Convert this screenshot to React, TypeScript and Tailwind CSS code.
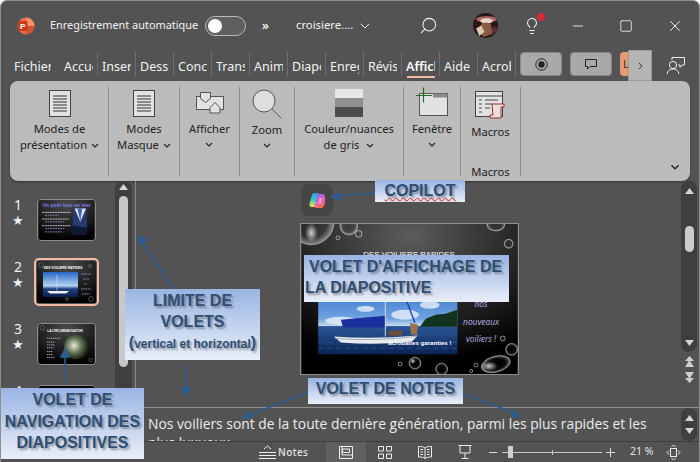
import React from "react";
import { Search, X, Square, Minus, Lightbulb, ChevronDown } from "lucide-react";

const tabs: string[] = ["Fichier", "Accueil", "Insertion", "Dessin", "Conception", "Transitions", "Animations", "Diaporama", "Enregistrement", "Révision", "Affichage", "Aide", "Acrobat"];

function Chev({ className = "" }: { className?: string }) {
  return (
    <svg viewBox="0 0 8 5" className={"w-2 h-[5px] inline-block " + className} fill="none" stroke="currentColor" strokeWidth="1.1">
      <path d="M1 1l3 3 3-3" />
    </svg>
  );
}

function PageIcon() {
  return (
    <svg width="24" height="29" viewBox="0 0 24 29">
      <rect x="1.5" y="1.5" width="21" height="26" fill="#e2e2e2" stroke="#444" />
      <path d="M5 7h14M5 10h14M5 13h14M5 16h14M5 19h14M5 22h14" stroke="#333" />
    </svg>
  );
}

function Group({ w, children, label }: { w: number; children: React.ReactNode; label?: string }) {
  return (
    <div className="flex flex-col items-center border-r border-[#8c8c8c] pt-[2px] h-[89px] shrink-0" style={{ width: w }}>
      {children}
      {label && <div className="mt-auto -mb-[4px] text-[11.2px] leading-[16px] text-[#222]">{label}</div>}
    </div>
  );
}

function Lbl({ lines, chevInline, chevBelow }: { lines: string[]; chevInline?: boolean; chevBelow?: boolean }) {
  return (
    <div className="mt-[3px] text-[11.2px] leading-[16px] text-[#222] text-center whitespace-nowrap">
      {lines.map((l, i) => (
        <div key={i}>
          {l}
          {chevInline && i === lines.length - 1 && <Chev className="ml-[4px] align-[1px]" />}
        </div>
      ))}
      {chevBelow && <div className="h-[16px] flex items-center justify-center"><Chev /></div>}
    </div>
  );
}

function Thumb1() {
  return (
    <svg width="59" height="42" viewBox="0 0 59 42" className="block rounded-[4px] border border-[#8a8a8a] box-border">
      <defs>
        <radialGradient id="t1" cx="50%" cy="10%" r="90%"><stop offset="0" stop-color="#4a4a4a" /><stop offset="1" stop-color="#000" /></radialGradient>
      </defs>
      <rect width="59" height="42" fill="url(#t1)" />
      <text x="29.500" y="7.500" fontSize="5.400" fill="#7579e8" textAnchor="middle" fontFamily="Liberation Sans" fontWeight="bold">Un petit tour en mer</text>
      <g strokeWidth="0.900" strokeDasharray="2 0.700">
        <path d="M4 13h30M4 20h28M4 27h30" stroke="#e3e3f2" />
        <path d="M7 16h14M7 23h20M7 30h20M7 33.500h18" stroke="#8f8fd0" />
      </g>
      <rect x="36" y="9" width="15" height="27" fill="#25396a" />
      <path d="M38 9l6 14 6-14z" fill="#e3e8f2" />
      <path d="M41 9l3 14 2-14z" fill="#3f66b8" />
      <path d="M36 27l15 2v7H36z" fill="#101a36" />
    </svg>
  );
}

function Thumb2() {
  return (
    <svg width="59" height="42" viewBox="0 0 59 42" className="rounded-[2px] block">
      <defs>
        <radialGradient id="t2" cx="50%" cy="10%" r="90%"><stop offset="0" stop-color="#4a4a4a" /><stop offset="1" stop-color="#000" /></radialGradient>
        <linearGradient id="t2s" x1="0" x2="0" y1="0" y2="1"><stop offset="0" stop-color="#2467c8" /><stop offset="0.55" stop-color="#b4d2f0" /><stop offset="0.68" stop-color="#1b3f80" /><stop offset="1" stop-color="#0d1f4c" /></linearGradient>
      </defs>
      <rect width="59" height="42" fill="url(#t2)" />
      <text x="26" y="8" fontSize="3.300" fill="#fff" textAnchor="middle" fontFamily="Liberation Sans" fontWeight="bold">DES VOILIERS RAPIDES</text>
      <rect x="6" y="11" width="35" height="25" fill="url(#t2s)" />
      <path d="M10 30h22l-3 2.500H13z" fill="#eee" />
      <path d="M20 14v16" stroke="#ddd" strokeWidth="0.600" />
      <path d="M44 13h10M46 18h6M47 23h3M44 28h10M45 33h8" stroke="#9c9ce0" strokeWidth="0.800" strokeDasharray="1.600 0.600" />
      <g fill="none" stroke="#999" strokeWidth="0.500"><circle cx="4" cy="4" r="2.400" /><circle cx="54" cy="38" r="2.400" /><circle cx="30" cy="38" r="1.400" /><circle cx="53" cy="5" r="1.500" /></g>
    </svg>
  );
}

function Thumb3() {
  return (
    <svg width="59" height="42" viewBox="0 0 59 42" className="block rounded-[4px] border border-[#8a8a8a] box-border">
      <defs>
        <radialGradient id="t3" cx="50%" cy="10%" r="90%"><stop offset="0" stop-color="#4a4a4a" /><stop offset="1" stop-color="#000" /></radialGradient>
        <radialGradient id="t3g" cx="40%" cy="45%" r="60%"><stop offset="0" stop-color="#e6ecd8" /><stop offset="0.550" stop-color="#586a4c" /><stop offset="1" stop-color="#14180f" /></radialGradient>
      </defs>
      <rect width="59" height="42" fill="url(#t3)" />
      <text x="28" y="8" fontSize="3.200" fill="#fff" textAnchor="middle" fontFamily="Liberation Sans" fontWeight="bold">LA CIRCUMNAVIGATION</text>
      <circle cx="40" cy="24" r="13" fill="url(#t3g)" />
      <path d="M9 15h14M9 19h8M9 22h8M9 25h7M9 29h6M9 32h6M9 35h8" stroke="#c9c9e6" strokeWidth="0.800" strokeDasharray="1.500 0.600" />
      <g fill="none" stroke="#999" strokeWidth="0.500"><circle cx="4" cy="4" r="2.400" /><circle cx="55" cy="38" r="2" /></g>
    </svg>
  );
}

function Row({ n, children, last }: { n: number; children?: React.ReactNode; last?: boolean }) {
  return (
    <div className="flex h-[62px] shrink-0 items-start">
      <div className="w-[36px] pl-[12px] -mt-px leading-[14px] text-[#f0f0f0] text-[14px] shrink-0">
        <div className="w-[12px] text-center">{n}</div>
        {!last && <div className="w-[12px] text-center text-[13px] leading-[16px]">★</div>}
      </div>
      {children}
    </div>
  );
}

function Slide() {
  return (
    <svg width="219" height="152" viewBox="0 0 219 152" className="block border border-[#8e8e8e] box-border">
      <defs>
        <radialGradient id="sb" cx="50%" cy="8%" r="85%"><stop offset="0" stop-color="#5c5c5c" /><stop offset="1" stop-color="#000" /></radialGradient>
        <linearGradient id="sky" x1="0" x2="0" y1="0" y2="1"><stop offset="0" stop-color="#2f6cc6" /><stop offset="0.5" stop-color="#6fa4e0" /><stop offset="0.6" stop-color="#c2d8ee" /><stop offset="0.61" stop-color="#2a5596" /><stop offset="1" stop-color="#0b2454" /></linearGradient>
        <radialGradient id="bub" cx="50%" cy="50%" r="50%"><stop offset="0" stop-color="#fff" stop-opacity="0" /><stop offset="0.7" stop-color="#fff" stop-opacity="0.04" /><stop offset="1" stop-color="#fff" stop-opacity="0.45" /></radialGradient>
        <radialGradient id="hi" cx="50%" cy="50%" r="50%"><stop offset="0" stop-color="#ddd" stop-opacity="0.9" /><stop offset="1" stop-color="#ddd" stop-opacity="0" /></radialGradient>
      </defs>
      <rect width="219" height="152" fill="url(#sb)" />
      <g fill="url(#bub)" stroke="#d8d8d8" strokeOpacity="0.7" strokeWidth="0.700">
        <circle cx="10" cy="-2" r="23" />
        <circle cx="48" cy="2" r="9" />
        <circle cx="37" cy="14" r="2" />
        <circle cx="58" cy="10" r="3.500" />
        <circle cx="210" cy="20" r="4.500" />
        <ellipse cx="197" cy="1" rx="9" ry="6" />
        <circle cx="115" cy="141" r="6" />
        <circle cx="100" cy="142" r="2" />
        <circle cx="142" cy="147" r="6" />
        <circle cx="177" cy="143" r="2" />
        <circle cx="172" cy="149" r="1.500" />
        <ellipse cx="197" cy="142" rx="15" ry="8" transform="rotate(-15 197 142)" />
        <circle cx="213" cy="127" r="6" />
        <circle cx="204" cy="116" r="2.500" />
      </g>
      <ellipse cx="10" cy="9" rx="6.500" ry="10" fill="url(#hi)" />
      <ellipse cx="190" cy="144" rx="9" ry="5" fill="url(#hi)" />
      <circle cx="113" cy="139" r="3" fill="url(#hi)" />
      <text x="109" y="33" fontSize="8" fill="#fff" textAnchor="middle" fontFamily="Liberation Sans">DES VOILIERS RAPIDES</text>
      <rect x="17" y="60" width="141" height="72" fill="url(#sky)" />
      <g fill="#e8f0fa" opacity="0.8">
        <ellipse cx="40" cy="98" rx="16" ry="4" /><ellipse cx="65" cy="86" rx="9" ry="3" /><ellipse cx="105" cy="92" rx="14" ry="5" /><ellipse cx="130" cy="82" rx="10" ry="4" />
      </g>
      <path d="M120 104l6-8 10-4 10-1 12-4v17z" fill="#12331e" />
      <path d="M17 112h141M17 120h141M17 126h141" stroke="#3f6cb0" strokeWidth="0.800" strokeDasharray="5 4" opacity="0.600" />
      <path d="M33 114q40 3 85-1l-6 6q-35 4-72 1z" fill="#e9ecef" />
      <path d="M33 116q40 3 84-2" fill="none" stroke="#7f8c9c" strokeWidth="0.700" />
      <path d="M40 97l45-4v12H42z" fill="#1b2f9e" />
      <path d="M85 62v52" stroke="#d2dae4" strokeWidth="1" />
      <path d="M107 79l8 21" stroke="#2a3fb5" strokeWidth="1.400" />
      <path d="M88 108h14v5H88z" fill="#6e4b3a" />
      <path d="M110 100l8 2-1 10h-6z" fill="#a0704f" />
      <text x="120" y="122.500" fontSize="6.200" fontWeight="bold" fill="#fff" textAnchor="middle" fontFamily="Liberation Sans">acrobaties garanties !</text>
      <g fontFamily="Open Sans" fontStyle="italic" fontSize="8.500" fill="#b6b6ea" textAnchor="middle">
        <text x="182" y="84">nos</text>
        <text x="182" y="102">nouveaux</text>
        <text x="182" y="120">voiliers !</text>
      </g>
    </svg>
  );
}

function Label({ className, children }: { className: string; children: React.ReactNode }) {
  return (
    <div className={"absolute bg-gradient-to-b from-[#9ab4e3] to-[#e9eef8] text-[#2e4e74] font-bold [font-family:'Liberation_Sans',sans-serif] [text-shadow:2px_2px_2px_rgba(60,60,60,0.45)] " + className}>
      {children}
    </div>
  );
}

export default function App() {
  return (
    <div className="relative w-[700px] h-[462px] bg-[#535353] overflow-hidden rounded-t-[7px] border-t border-x border-[#8f8f8f] box-border flex flex-col text-[#f2f2f2] [font-family:'Noto_Sans',sans-serif]">
      {/* title bar */}
      <div className="h-[51px] shrink-0 flex items-center relative -ml-px pb-[2px]">
        <svg width="18" height="18" viewBox="0 0 18 18" className="ml-[17px] shrink-0">
          <circle cx="9" cy="9" r="8.500" fill="#ed6c47" />
          <path d="M9 .5A8.500 8.500 0 0 1 17.500 9H9z" fill="#ff8f6b" />
          <path d="M9 9h8.500A8.500 8.500 0 0 1 9 17.500z" fill="#d35230" />
          <rect x="1" y="4" width="9.500" height="10" rx="1" fill="#c43e1c" />
          <text x="5.700" y="12" fontSize="8" fontWeight="bold" fill="#fff" textAnchor="middle" fontFamily="Liberation Sans">P</text>
        </svg>
        <span className="ml-[15px] text-[10.900px] whitespace-nowrap w-[155px]">Enregistrement automatique</span>
        <span className="w-[41px] h-[20px] rounded-full border border-[#b9b9b9] bg-[#5f5f5f] flex items-center pl-[2px] shrink-0">
          <span className="w-[14px] h-[14px] rounded-full bg-white" />
        </span>
        <span className="ml-[16px] w-[34px] text-[12px] font-semibold shrink-0">»</span>
        <span className="text-[11.300px] whitespace-nowrap w-[61px] shrink-0">croisiere....</span>
        <ChevronDown size={16} strokeWidth={1.400} className="shrink-0" />
        <Search size={19} strokeWidth={1.300} className="ml-[46px] shrink-0 -scale-x-100" />
        <svg width="25" height="25" viewBox="0 0 24 24" className="ml-[35px] shrink-0">
          <defs>
            <clipPath id="av"><circle cx="12" cy="12" r="12" /></clipPath>
            <filter id="avb"><feGaussianBlur stdDeviation="0.600" /></filter>
          </defs>
          <g clipPath="url(#av)">
            <rect width="24" height="24" fill="#2a1517" />
            <g filter="url(#avb)">
              <ellipse cx="13" cy="6" rx="10" ry="3" fill="#a86a68" />
              <ellipse cx="13" cy="7.500" rx="6" ry="2.500" fill="#ead3c6" />
              <path d="M8 10l5-1 4 1 2 10-9 3-4-5z" fill="#8a5c42" />
              <path d="M3 15l5-3 3 6-5 4z" fill="#d8c8ae" />
              <circle cx="21" cy="16" r="3" fill="#55302f" />
            </g>
          </g>
        </svg>
        <span className="relative ml-[25px] shrink-0 flex">
          <Lightbulb size={18} strokeWidth={1.400} />
          <span className="absolute -top-[4px] right-[-4px] w-2 h-2 rounded-full bg-[#d92b36]" />
        </span>
        <Minus size={16} strokeWidth={1.300} className="ml-[29px] shrink-0" />
        <Square size={14} strokeWidth={1.400} className="ml-[33px] shrink-0" />
        <X size={18} strokeWidth={1.300} className="ml-[33px] shrink-0" />
      </div>

      {/* tabs */}
      <div className="h-[29px] shrink-0 relative flex items-start -mx-px">
        {tabs.map((t, i) => (
          <React.Fragment key={t}>
            <div
              className={"shrink-0 overflow-hidden whitespace-nowrap text-[12.500px] leading-[24px] h-[24px] pt-[3px] " + (t === "Affichage" ? "font-semibold text-white" : "")}
              style={{ width: i === 0 ? 37 : 29, marginLeft: i === 0 ? 14 : i === 1 ? 13 : 4 }}
            >
              {i < 1 ? t : t.slice(0, t === "Affichage" ? 7 : 6)}
            </div>
            {i > 0 && <div className="ml-[4px] w-px h-[24px] bg-[#6e6e6e] shrink-0" />}
          </React.Fragment>
        ))}
        <div className="absolute left-[407px] top-[24px] w-[28px] h-[2px] bg-[#f0b9a5]" />
        <div className="ml-[4px] w-[42px] h-[24px] rounded-[4px] bg-[#a9a9a9] border border-[#888] flex items-center justify-center shrink-0">
          <svg width="13" height="13" viewBox="0 0 13 13"><circle cx="6.500" cy="6.500" r="5.700" fill="none" stroke="#222" /><circle cx="6.500" cy="6.500" r="3.200" fill="#222" /></svg>
        </div>
        <div className="ml-[8px] w-[42px] h-[24px] rounded-[4px] bg-[#a9a9a9] border border-[#888] flex items-center justify-center shrink-0">
          <svg width="12" height="11" viewBox="0 0 12 11" fill="none" stroke="#222"><path d="M.5.5h11v7H5L2.500 10V7.500H.5z" /></svg>
        </div>
        <div className="ml-[8px] w-[14px] h-[24px] rounded-l-[4px] bg-[#e49b6f] shrink-0 text-[#333] text-[11px] pl-[3px] leading-[24px]">L</div>
        <div className="absolute left-[628px] top-[-2px] w-[24px] h-[31px] bg-[#b5b5b5] border border-[#9a9a9a] text-[#333] flex items-center justify-center">
          <svg width="5" height="8" viewBox="0 0 5 8" fill="none" stroke="currentColor"><path d="M1 1l3 3-3 3" /></svg>
        </div>
        <svg width="19" height="18" viewBox="0 0 19 18" className="absolute left-[666px] top-[5px]" fill="none" stroke="#eee" strokeWidth="1">
          <circle cx="7" cy="8" r="3.600" /><path d="M1 17c.5-3.500 3-5 6-5s5.500 1.500 6 5" /><path d="M6 3V.5h12.500V8H16l-2 2.500V8h-2" />
        </svg>
      </div>

      {/* ribbon */}
      <div className="mx-[9px] h-[100px] shrink-0 rounded-[8px] bg-[#bbbbbb] flex items-center shadow-[0_1px_2px_rgba(0,0,0,0.4)] pl-px">
        <Group w={98}><PageIcon /><Lbl lines={["Modes de", "présentation"]} chevInline /></Group>
        <Group w={71}><PageIcon /><Lbl lines={["Modes", "Masque"]} chevInline /></Group>
        <Group w={60}>
          <svg width="30" height="29" viewBox="0 0 30 29" fill="#e2e2e2" stroke="#555">
            <rect x="1.500" y="7.500" width="27" height="13" />
            <path d="M5.500 3.500h10v6l-5 4-5-4z" />
            <path d="M20 13.500l5 5v5.500H15v-5.500z" />
          </svg>
          <Lbl lines={["Afficher"]} chevBelow />
        </Group>
        <Group w={55}>
          <svg width="32" height="30" viewBox="0 0 32 30" fill="none" stroke="#555" strokeWidth="1">
            <circle cx="13" cy="12" r="11" fill="#dedede" /><path d="M21 20l9 9" />
          </svg>
          <Lbl lines={["Zoom"]} chevBelow />
        </Group>
        <Group w={109}>
          <svg width="28" height="28" viewBox="0 0 28 28" className="mb-px">
            <rect width="28" height="9" fill="#e6e6e6" /><rect y="9" width="28" height="9" fill="#8f8f8f" /><rect y="18" width="28" height="10" fill="#4c4c4c" />
          </svg>
          <Lbl lines={["Couleur/nuances"]} />
          <div className="text-[11.200px] leading-[16px] text-[#222]">de gris <Chev className="ml-[4px] align-[1px]" /></div>
        </Group>
        <Group w={57}>
          <svg width="32" height="29" viewBox="0 0 32 29" fill="none" className="overflow-visible">
            <rect x="3.500" y="4.500" width="28" height="22" fill="#e2e2e2" stroke="#555" />
            <rect x="17" y="4.500" width="14.500" height="4" fill="#8a8a8a" />
            <path d="M0 6.500h16M7.500 -1.500v15" stroke="#1e6b25" strokeWidth="1.200" />
          </svg>
          <Lbl lines={["Fenêtre"]} chevBelow />
        </Group>
        <Group w={60} label="Macros">
          <svg width="31" height="30" viewBox="0 0 31 30" fill="none">
            <rect x=".5" y="2.500" width="27" height="25" fill="#e2e2e2" stroke="#444" />
            <path d="M0 7h28" stroke="#444" />
            <path d="M4 11h3M10 11h13M4 15h3M10 15h8M4 19h3M10 19h5M4 23h3" stroke="#444" />
            <path d="M17 15h12v3h-3v11H15v-3h3z" fill="#e9e0dc" stroke="#a52a2a" />
          </svg>
          <div className="mt-[5px] text-[11.200px] leading-[16px] text-[#222]">Macros</div>
        </Group>
        <div className="flex-1 self-end flex justify-end pr-[10px] pb-[11px] text-[#222]"><Chev className="!w-[10px] !h-[6px]" /></div>
      </div>

      {/* main */}
      <div className="flex-1 min-h-0 flex -mx-px">
        <div className="w-[115px] shrink-0 pt-[18px] flex flex-col overflow-hidden">
          <Row n={1}><div className="ml-px"><Thumb1 /></div></Row>
          <Row n={2}><div className="-ml-[2px] -mt-[3px] border-2 border-[#f5b9a4] rounded-[5px] p-px"><Thumb2 /></div></Row>
          <Row n={3}><div className="ml-px"><Thumb3 /></div></Row>
          <Row n={4} last><div className="ml-px w-[59px] h-[42px] rounded-[4px] bg-black border border-[#8a8a8a]" /></Row>
        </div>
        <div className="w-[17px] shrink-0 bg-[#3f3f3f] rounded-t-[8px] flex flex-col items-center pt-[3px]">
          <svg width="9" height="6" viewBox="0 0 9 6" fill="#d4d4d4"><path d="M4.500 0L9 6H0z" /></svg>
          <div className="mt-[6px] w-[9px] h-[171px] rounded-full bg-[#c8c8c8]" />
        </div>
        <div className="w-[3px] shrink-0" />
        <div className="flex-1 min-w-0 flex flex-col">
          <div className="h-[226px] shrink-0 flex border-l border-[#8a8a8a] border-b-0">
            <div className="flex-1 flex justify-center pl-[2px]">
              <div className="w-[219px] flex flex-col pt-[3px]">
                <div className="w-[32px] h-[32px] rounded-[8px] bg-[#454545] ml-px flex items-center justify-center">
                  <svg width="17" height="17" viewBox="0 0 17 17">
                    <defs>
                      <linearGradient id="c1" x1="0.500" y1="0" x2="0.300" y2="1"><stop offset="0" stop-color="#2f9ee8" /><stop offset="0.500" stop-color="#30d0c0" /><stop offset="1" stop-color="#f4e04a" /></linearGradient>
                      <linearGradient id="c2" x1="0.300" y1="0" x2="0.700" y2="1"><stop offset="0" stop-color="#8a6cf0" /><stop offset="0.500" stop-color="#e85ac0" /><stop offset="1" stop-color="#f7703c" /></linearGradient>
                    </defs>
                    <path d="M5 1h5L7 15H3Q0 15 .5 12L3 3Q3.500 1 5 1z" fill="url(#c1)" />
                    <path d="M8 2h5q3 0 3 3v5q-1 6-4 6H7q-2 0-1-3l2-9q0-2 0-2z" fill="url(#c2)" />
                    <path d="M10.500 6h3l-1.500 6H9z" fill="#f8c8d8" opacity=".55" />
                  </svg>
                </div>
                <div className="mt-[7px]"><Slide /></div>
              </div>
            </div>
            <div className="w-[19px] shrink-0 flex flex-col items-center pr-[3px]">
              <div className="w-[16px] h-[171px] rounded-full bg-[#3f3f3f] flex flex-col items-center pt-[7px] pb-[6px] shrink-0">
                <svg width="9" height="6" viewBox="0 0 9 6" fill="#d4d4d4"><path d="M4.500 0L9 6H0z" /></svg>
                <div className="mt-[32px] w-[9px] h-[26px] rounded-full bg-[#cbcbcb]" />
                <svg width="9" height="6" viewBox="0 0 9 6" fill="#d4d4d4" className="mt-auto"><path d="M0 0h9L4.500 6z" /></svg>
              </div>
              <svg width="9" height="11" viewBox="0 0 9 11" fill="#cfcfcf" className="mt-[4px]"><path d="M4.500 0L9 5H0zM4.500 4L9 11H0z" /></svg>
              <svg width="9" height="11" viewBox="0 0 9 11" fill="#cfcfcf" className="mt-[5px]"><path d="M0 0h9L4.500 7zM0 6h9L4.500 11z" /></svg>
            </div>
          </div>
          <div className="flex-1 min-h-0 border-t border-[#8e8e8e] flex overflow-hidden">
            <div className="flex-1 min-w-0 pl-[13px] pt-[6px] text-[13.850px] leading-[19px] text-[#ececec] whitespace-nowrap [font-family:'Open_Sans',sans-serif]">
              Nos voiliers sont de la toute dernière génération, parmi les plus rapides et les<br />plus luxueux
            </div>
            <div className="w-[16px] mr-[3px] shrink-0 rounded-full bg-[#3f3f3f] flex flex-col items-center justify-between py-[7px]">
              <svg width="9" height="6" viewBox="0 0 9 6" fill="#d4d4d4"><path d="M4.500 0L9 6H0z" /></svg>
              <svg width="9" height="6" viewBox="0 0 9 6" fill="#d4d4d4"><path d="M0 0h9L4.500 6z" /></svg>
            </div>
          </div>
        </div>
      </div>

      {/* status bar */}
      <div className="h-[21px] shrink-0 border-t border-[#3f3f3f] flex items-center -mx-px text-[#e4e4e4]">
        <svg width="17" height="14" viewBox="0 0 17 14" fill="none" stroke="#eee" className="ml-[259px] shrink-0"><path d="M0 7.500h17M0 10.500h17M0 13.500h17M5 4l3.500-3L12 4" /></svg>
        <span className="ml-[2px] text-[10px] font-medium tracking-[0.400px] w-[33px] shrink-0">Notes</span>
        <div className="ml-[15px] w-[40px] h-full bg-[#606060] flex items-center justify-center shrink-0">
          <svg width="14" height="13" viewBox="0 0 14 13" fill="none" stroke="#eee"><path d="M.5.5h13v12H.5zM3 .5V9h10" /><path d="M3.500 3h7v3.500h-7z" /></svg>
        </div>
        <svg width="14" height="13" viewBox="0 0 14 13" fill="none" stroke="#eee" className="ml-[12px] shrink-0"><path d="M.5.5h5v4.500h-5zM8.500.5h5v4.500h-5zM.5 8h5v4.500h-5zM8.500 8h5v4.500h-5z" /></svg>
        <svg width="14" height="13" viewBox="0 0 14 13" fill="none" stroke="#eee" className="ml-[26px] shrink-0"><path d="M7 2C5 .5 3 .5.500.5v10.500C3 11 5 11 7 12.500 9 11 11 11 13.500 11V.5C11 .5 9 .5 7 2zM7 2v10.500M2.500 3.500h2.500M2.500 6h2.500M2.500 8.500h2.500M9 3.500h2.500M9 6h2.500M9 8.500h2.500" /></svg>
        <svg width="14" height="14" viewBox="0 0 14 14" fill="none" stroke="#eee" className="ml-[26px] shrink-0"><path d="M.5.500h13M2 .5v7.500h10V.5M7 8v5M3.500 13.500h7" /></svg>
        <span className="ml-[17px] w-[8px] h-px bg-[#ddd] shrink-0" />
        <div className="relative ml-[5px] w-[100px] h-[13px] shrink-0 flex items-center">
          <div className="w-full h-px bg-[#c8c8c8]" />
          <div className="absolute left-[50px] w-px h-[5px] bg-[#c8c8c8]" />
          <div className="absolute left-[6px] w-[5px] h-[12px] bg-[#d0d0d0]" />
        </div>
        <svg width="9" height="9" viewBox="0 0 9 9" stroke="#ddd" className="ml-[4px] shrink-0"><path d="M0 4.500h9M4.500 0v9" /></svg>
        <span className="ml-[15px] text-[10.500px] whitespace-nowrap w-[26px] shrink-0">21 %</span>
        <svg width="15" height="15" viewBox="0 0 15 15" fill="none" stroke="#eee" className="ml-[10px] shrink-0"><rect x="4.500" y="3.500" width="6" height="8" /><path d="M5.500 1.500L7.500 0l2 1.500M5.500 13.500l2 1.500 2-1.500M3 5.500L1 7.500l2 2M12 5.500l2 2-2 2" /></svg>
      </div>

      {/* annotation arrows */}
      <svg width="700" height="462" viewBox="0 0 700 462" className="absolute -left-px -top-px pointer-events-none" fill="#2f5c90" stroke="#2f5c90" strokeWidth="1.600">
        <path d="M174 289L141 241" fill="none" /><path d="M138 236l9 4-6 5z" />
        <path d="M186 365v24" fill="none" /><path d="M182 388h8l-4 7z" />
        <path d="M65 382v-26" fill="none" /><path d="M61 357h8l-4-8z" />
        <path d="M375 193l-37 3" fill="none" /><path d="M331 197l8-4v7z" />
        <path d="M308 392l-63 25" fill="none" /><path d="M243 418l6-6 3 5z" />
        <path d="M463 394l55 20" fill="none" /><path d="M520 417l-8-1 2-5z" />
      </svg>

      {/* annotation labels */}
      <Label className="left-[374px] top-[179px] w-[90px] h-[22px] text-[16px] leading-[21px] text-center underline decoration-wavy decoration-[#e02020] decoration-1">COPILOT</Label>
      <Label className="left-[303px] top-[254px] w-[205px] h-[47px] text-[16px] leading-[21px] pl-[1px] pt-[1px]">
        <span className="pl-[4px]">VOLET D'AFFICHAGE DE</span><br />LA DIAPOSITIVE
      </Label>
      <Label className="left-[307px] top-[377px] w-[155px] h-[26px] text-[16px] leading-[22px] text-center">VOLET DE NOTES</Label>
      <Label className="left-[124px] top-[288px] w-[135px] h-[71px] text-[16px] leading-[21px] text-center pt-[1px]">
        LIMITE DE<br />VOLETS<br />
        <span className="text-[12px]"><span className="text-[16px]">(</span>vertical et horizontal<span className="text-[16px]">)</span></span>
      </Label>
      <Label className="left-[0px] top-[387px] w-[143px] h-[71px] text-[16px] leading-[21.500px] text-center pt-[1px]">
        VOLET DE<br />NAVIGATION DES<br />DIAPOSITIVES
      </Label>
    </div>
  );
}
